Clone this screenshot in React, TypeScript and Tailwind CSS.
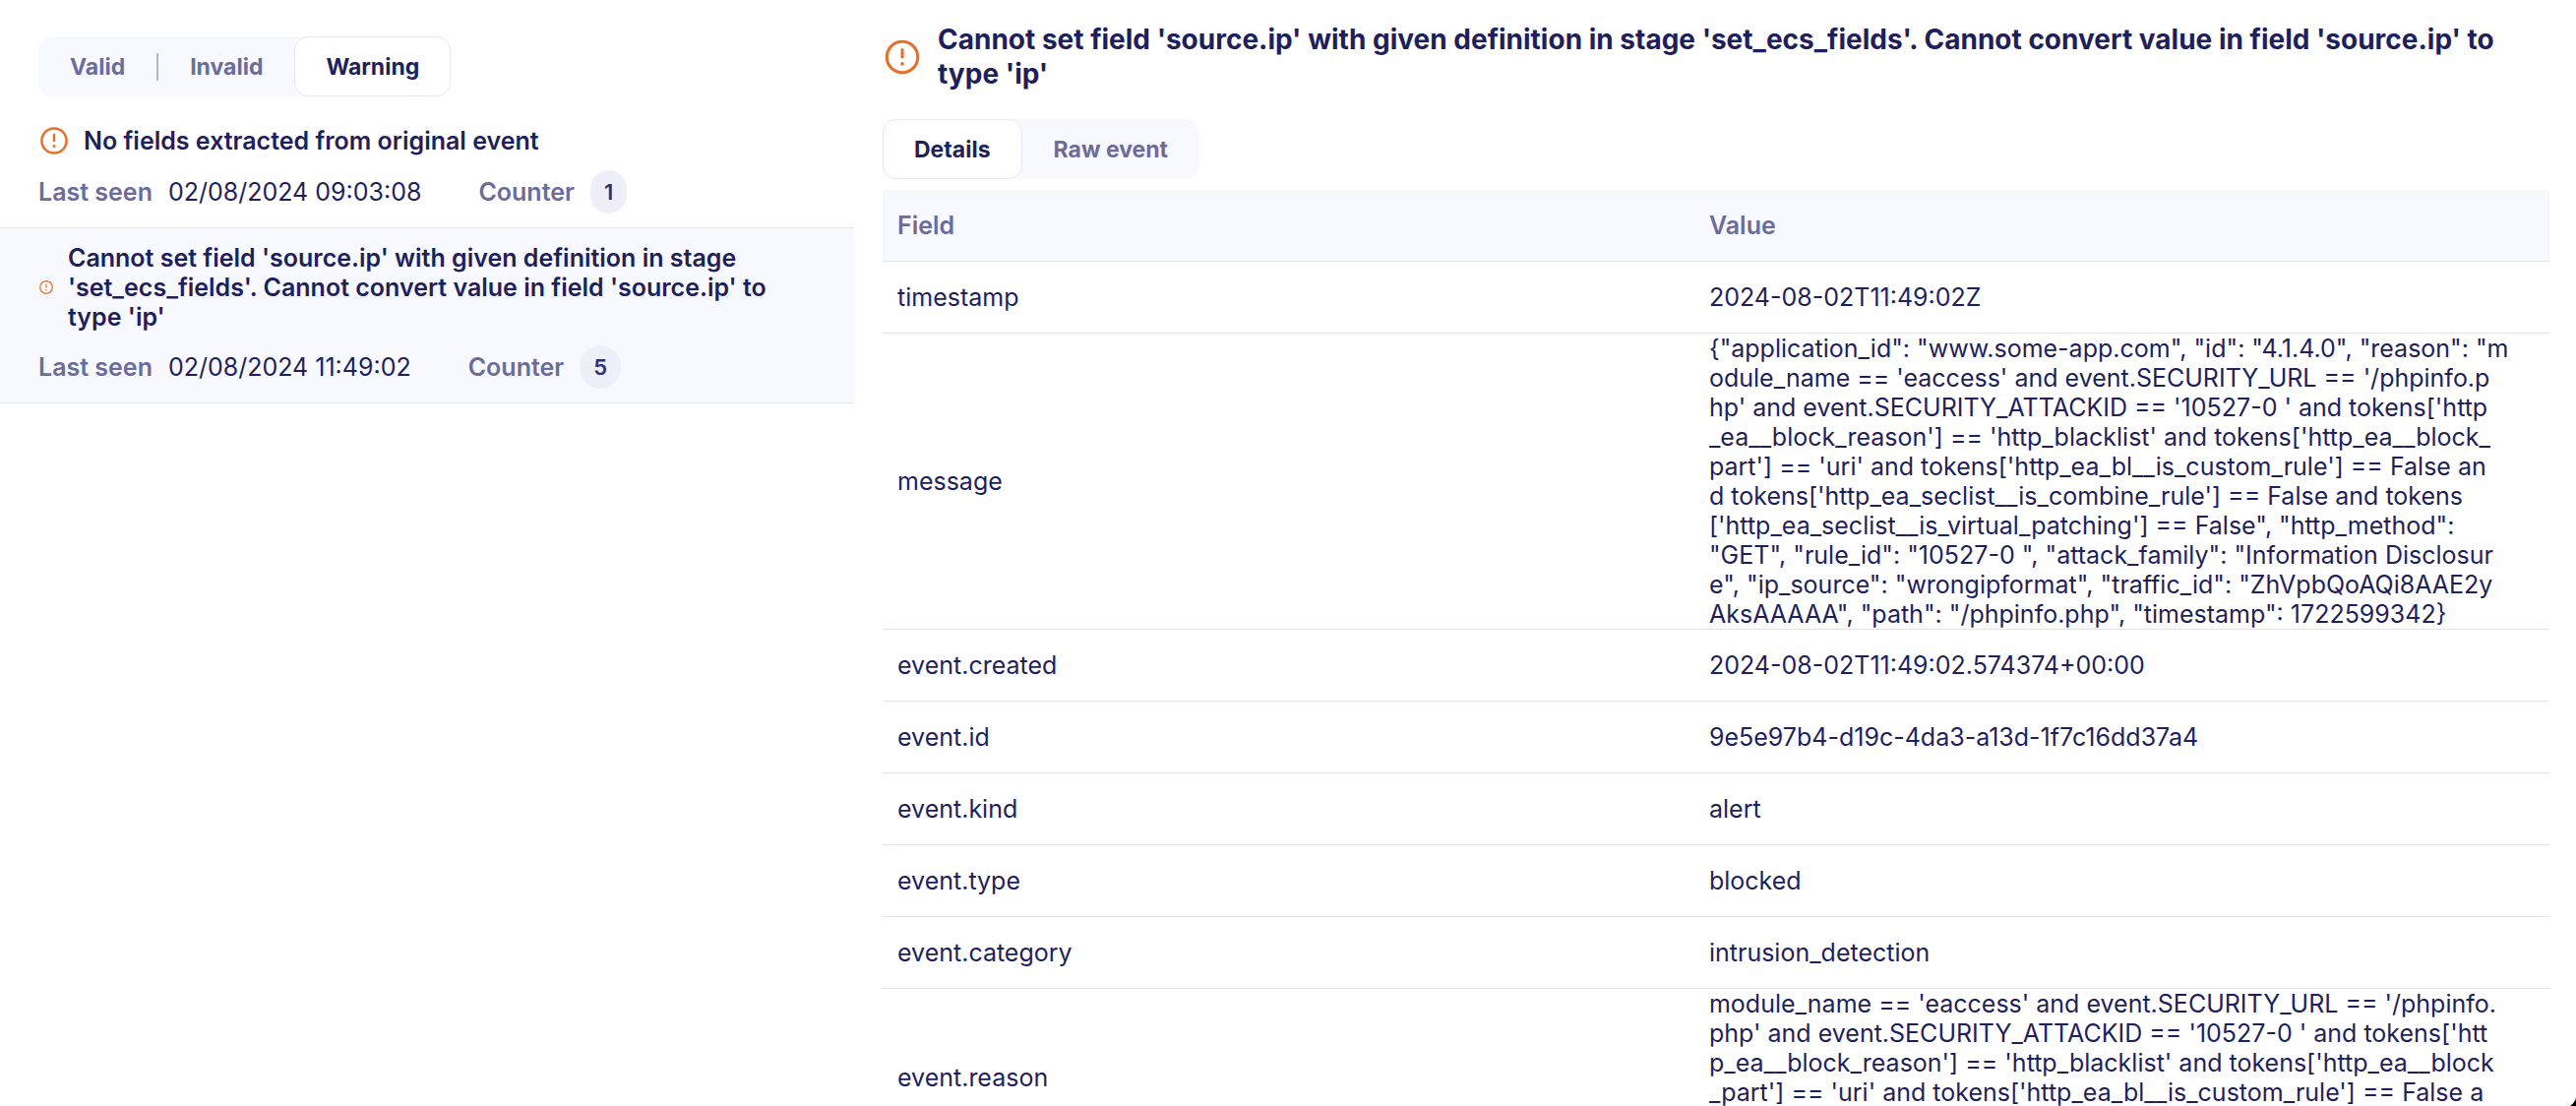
import React from "react";

const fieldsError =
  "Cannot set field 'source.ip' with given definition in stage 'set_ecs_fields'. Cannot convert value in field 'source.ip' to type 'ip'";

const warnings = [
  {
    title: "No fields extracted from original event",
    lastSeen: "02/08/2024 09:03:08",
    count: 1,
    selected: false,
  },
  { title: fieldsError, lastSeen: "02/08/2024 11:49:02", count: 5, selected: true },
];

const message = `{"application_id": "www.some-app.com", "id": "4.1.4.0", "reason": "m
odule_name == 'eaccess' and event.SECURITY_URL == '/phpinfo.p
hp' and event.SECURITY_ATTACKID == '10527-0 ' and tokens['http
_ea__block_reason'] == 'http_blacklist' and tokens['http_ea__block_
part'] == 'uri' and tokens['http_ea_bl__is_custom_rule'] == False an
d tokens['http_ea_seclist__is_combine_rule'] == False and tokens
['http_ea_seclist__is_virtual_patching'] == False", "http_method":
"GET", "rule_id": "10527-0 ", "attack_family": "Information Disclosur
e", "ip_source": "wrongipformat", "traffic_id": "ZhVpbQoAQi8AAE2y
AksAAAAA", "path": "/phpinfo.php", "timestamp": 1722599342}`;

const reason = `module_name == 'eaccess' and event.SECURITY_URL == '/phpinfo.
php' and event.SECURITY_ATTACKID == '10527-0 ' and tokens['htt
p_ea__block_reason'] == 'http_blacklist' and tokens['http_ea__block
_part'] == 'uri' and tokens['http_ea_bl__is_custom_rule'] == False a
nd tokens['http_ea_seclist__is_combine_rule'] == False and token
s['http_ea_seclist__is_virtual_patching'] == False`;

const rows: [string, string][] = [
  ["timestamp", "2024-08-02T11:49:02Z"],
  ["message", message],
  ["event.created", "2024-08-02T11:49:02.574374+00:00"],
  ["event.id", "9e5e97b4-d19c-4da3-a13d-1f7c16dd37a4"],
  ["event.kind", "alert"],
  ["event.type", "blocked"],
  ["event.category", "intrusion_detection"],
  ["event.reason", reason],
];

function AlertIcon({ className }: { className: string }) {
  return (
    <svg viewBox="0 0 32 32" fill="none" className={className} aria-hidden="true">
      <circle cx="16" cy="16" r="12.6" stroke="#e5702a" strokeWidth="2.5" />
      <path d="M16 10v6" stroke="#e5702a" strokeWidth="2.5" strokeLinecap="round" />
      <circle cx="16" cy="21.4" r="1.5" fill="#e5702a" />
    </svg>
  );
}

function Tab({ label, active = false }: { label: string; active?: boolean }) {
  return (
    <button
      type="button"
      role="tab"
      aria-selected={active}
      className={
        active
          ? "h-full rounded-[14px] border border-[#e6e6fa] bg-white px-[31px] text-[#1f1f5c]"
          : "h-full px-8 text-[#6c6c9c]"
      }
    >
      {label}
    </button>
  );
}

function TabList({ children }: { children: React.ReactNode }) {
  return (
    <div
      role="tablist"
      className="flex h-[61px] w-fit items-center rounded-[14px] bg-[#f8f9fe] text-[23px] leading-7 font-bold"
    >
      {children}
    </div>
  );
}

export default function App() {
  return (
    <div className="relative grid h-screen grid-cols-[868fr_1750fr] overflow-hidden bg-white font-['Inter',sans-serif] text-[25px] leading-[30px] text-[#1f1f5c]">
      <aside className="pt-[37px]">
        <div className="px-[39px]">
          <TabList>
            <Tab label="Valid" />
            <span className="h-7 w-0.5 bg-[#b4b4e0]" />
            <Tab label="Invalid" />
            <Tab label="Warning" active />
          </TabList>
        </div>
        <ul className="mt-3.5">
          {warnings.map((w) => (
            <li
              key={w.title}
              className={
                w.selected
                  ? "border-b border-[#e1e3ee] bg-[#f8f9fe] px-[39px] pt-[15px] pb-3.5"
                  : "border-b border-[#e1e3ee] px-[39px] pt-[15px] pb-3.5"
              }
            >
              <div className="flex items-center gap-3.5">
                <AlertIcon className={w.selected ? "size-4 shrink-0" : "size-8 shrink-0"} />
                <h3 className="font-semibold">{w.title}</h3>
              </div>
              <div className="mt-3.5 flex items-center">
                <span className="font-semibold text-[#6c6c9c]">Last seen</span>
                <span className="ml-4">{w.lastSeen}</span>
                <span className="ml-[58px] font-semibold text-[#6c6c9c]">Counter</span>
                <span className="ml-4 rounded-full bg-[#efeff9] px-3.5 py-2 text-[22px] leading-7 font-semibold text-[#2e2e80]">
                  {w.count}
                </span>
              </div>
            </li>
          ))}
        </ul>
      </aside>

      <main className="pt-[23px] pr-[27px] pl-[29px]">
        <div className="flex items-center gap-4">
          <AlertIcon className="size-10 shrink-0" />
          <h2 className="text-[28px] leading-[35px] font-bold">{fieldsError}</h2>
        </div>
        <div className="mt-7">
          <TabList>
            <Tab label="Details" active />
            <Tab label="Raw event" />
          </TabList>
        </div>
        <table className="mt-[11px] w-full table-fixed border-separate border-spacing-0 text-left">
          <colgroup>
            <col className="w-[48.7%]" />
            <col />
          </colgroup>
          <thead>
            <tr className="h-[73px] bg-[#f8f9fe] text-[#6c6c9c]">
              <th className="border-b border-[#e1e3ee] px-[15px] font-semibold">Field</th>
              <th className="border-b border-[#e1e3ee] px-[15px] font-semibold">Value</th>
            </tr>
          </thead>
          <tbody>
            {rows.map(([field, value]) => (
              <tr key={field} className="h-[73px]">
                <td className="border-b border-[#e1e1ef] px-[15px] align-middle">{field}</td>
                <td className="border-b border-[#e1e1ef] px-[15px] align-middle break-all whitespace-pre-wrap">
                  {value}
                </td>
              </tr>
            ))}
          </tbody>
        </table>
      </main>

      <svg viewBox="0 0 6 8" className="absolute right-0 bottom-0 h-2 w-1.5" aria-hidden="true">
        <path d="M6 0C5 3 3 6 0 8H6Z" fill="#000" />
      </svg>
    </div>
  );
}
